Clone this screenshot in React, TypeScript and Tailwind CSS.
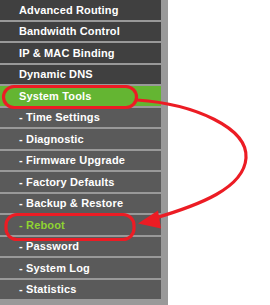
import React from "react";

const top = ["Advanced Routing", "Bandwidth Control", "IP & MAC Binding", "Dynamic DNS"];
const sub = [
  "Time Settings",
  "Diagnostic",
  "Firmware Upgrade",
  "Factory Defaults",
  "Backup & Restore",
  "Reboot",
  "Password",
  "System Log",
  "Statistics",
];

export default function App() {
  return (
    <div className="relative w-[270px] h-[305px] bg-white overflow-hidden" style={{ fontFamily: '"Liberation Sans", Arial, sans-serif' }}>
      <div className="w-[168px] h-full bg-[#999999] pr-[7px] flex flex-col gap-[2px]">
        {top.map((t) => (
          <div key={t} className="h-[19.5px] shrink-0 bg-[#404040] flex items-center pl-[19px] text-[11px] font-bold tracking-[0.15px] text-white">
            {t}
          </div>
        ))}
        <div className="h-[19.5px] shrink-0 bg-[#64b532] flex items-center pl-[19px] text-[11px] font-bold tracking-[0.15px] text-white">
          System Tools
        </div>
        {sub.map((t) => (
          <div
            key={t}
            className={
              t === "Reboot"
                ? "h-[19.5px] shrink-0 bg-[#5a5a5a] flex items-center pl-[19px] text-[11px] font-bold tracking-[0.15px] text-[#8fd431]"
                : "h-[19.5px] shrink-0 bg-[#5a5a5a] flex items-center pl-[19px] text-[11px] font-bold tracking-[0.15px] text-white"
            }
          >
            - {t}
          </div>
        ))}
      </div>
      <svg className="absolute inset-0" width="270" height="305" viewBox="0 0 270 305">
        <rect x="3.5" y="86.5" width="133" height="21" rx="10.5" fill="none" stroke="#ec1c24" strokeWidth="3.2" />
        <rect x="6" y="214.5" width="128" height="25" rx="11" fill="none" stroke="#ec1c24" strokeWidth="3.2" />
        <path d="M137,100 C195,104 248,128 246,158 C244,188 200,205 152,219" fill="none" stroke="#ec1c24" strokeWidth="3.2" />
        <polygon points="138,223.5 158,210.5 161,228.5" fill="#ec1c24" />
      </svg>
    </div>
  );
}
